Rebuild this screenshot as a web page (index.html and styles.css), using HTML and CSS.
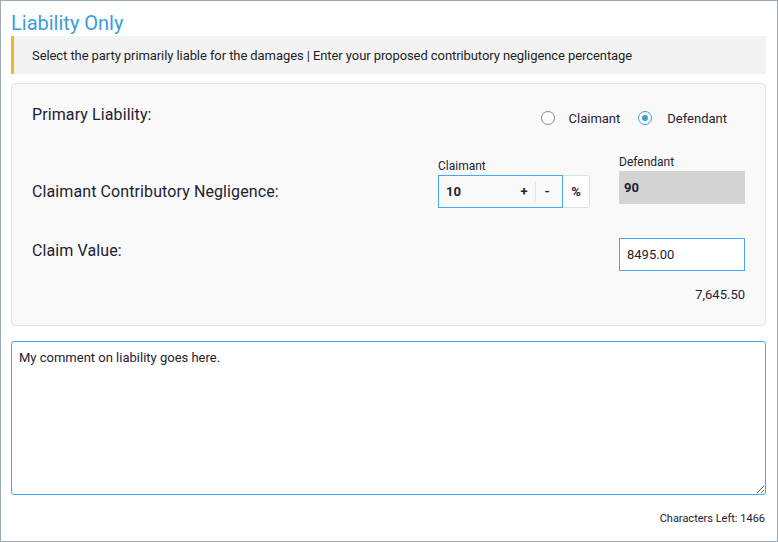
FILE: index.html
```html
<!DOCTYPE html>
<html lang="en">
<head>
<meta charset="utf-8">
<title>Liability Only</title>
<link rel="stylesheet" href="styles.css">
</head>
<body>
<div class="frame">
  <h1 class="title">Liability Only</h1>
  <div class="info">Select the party primarily liable for the damages | Enter your proposed contributory negligence percentage</div>

  <div class="panel">
    <div class="row row-liability">
      <div class="label">Primary Liability:</div>
      <div class="radios">
        <label class="radio"><span class="dot"></span><span>Claimant</span></label>
        <label class="radio"><span class="dot checked"></span><span>Defendant</span></label>
      </div>
    </div>

    <div class="row row-neg">
      <div class="label label-neg">Claimant Contributory Negligence:</div>
      <div class="col col-claimant">
        <div class="small">Claimant</div>
        <div class="group">
          <div class="num"><span class="val">10</span><span class="btn">+</span><span class="sep"></span><span class="btn">-</span></div>
          <div class="addon">%</div>
        </div>
      </div>
      <div class="col col-def">
        <div class="small">Defendant</div>
        <div class="readonly">90</div>
      </div>
    </div>

    <div class="row row-value">
      <div class="label label-value">Claim Value:</div>
      <div class="field">8495.00</div>
    </div>

    <div class="total">7,645.50</div>
  </div>

  <textarea class="comment">My comment on liability goes here.</textarea>
  <div class="chars">Characters Left: 1466</div>
</div>
</body>
</html>
```
FILE: styles.css
```css
* { box-sizing: border-box; }
html, body { margin: 0; padding: 0; background: #fff; }
body {
  font-family: Roboto, "Noto Sans", sans-serif;
  color: #1d2230;
}
.frame {
  width: 778px;
  height: 542px;
  border: 1px solid #9ba9b5;
  padding: 0 11px 0 10px;
}
.title {
  margin: 0;
  padding-top: 10px;
  height: 35px;
  font-size: 20px;
  line-height: 24px;
  font-weight: 400;
  color: #3a9ddd;
}
.info {
  height: 38px;
  background: #f3f3f3;
  border-left: 3px solid #f0b823;
  padding: 1px 0 0 18px;
  font-size: 13px;
  line-height: 37px;
  letter-spacing: -0.08px;
  color: #1f1f1f;
  margin-bottom: 9px;
}
.panel {
  background: #f9f9f9;
  border: 1px solid #e2e2e2;
  border-radius: 4px;
  padding: 20px 20px 20px 20px;
  height: 243px;
}
.row { display: flex; }
.label {
  flex: 1;
  font-size: 16px;
  line-height: 20px;
  padding-top: 1px;
  letter-spacing: 0.1px;
}
.row-liability { height: 50px; }
.radios {
  display: flex;
  margin-top: 4px;
  padding-right: 18px;
  height: 20px;
  align-items: center;
}
.radio {
  display: flex;
  align-items: center;
  font-size: 13px;
}
.radio + .radio { margin-left: 18px; }
.dot {
  width: 14px;
  height: 14px;
  border: 1px solid #8d8d8d;
  border-radius: 50%;
  background: #fff;
  margin-right: 15px;
  position: relative;
}
.radio:first-child .dot { margin-right: 14px; }
.dot.checked { border-color: #3a9ddd; }
.dot.checked::after {
  content: "";
  position: absolute;
  left: 3px; top: 3px;
  width: 6px; height: 6px;
  border-radius: 50%;
  background: #3a9ddd;
}
.row-neg { height: 54px; }
.label-neg { padding-top: 28px; }
.small {
  font-size: 12px;
  line-height: 16px;
  height: 17px;
}
.col-claimant { width: 152px; margin-top: 4px; margin-right: 29px; }
.col-def { width: 126px; }
.group { display: flex; height: 33px; }
.num {
  width: 125px;
  border: 1px solid #45a6f2;
  display: flex;
  align-items: center;
  padding-left: 7px;
  font-size: 13px;
  font-weight: 700;
}
.val { flex: 1; }
.btn { width: 10px; text-align: center; }
.sep { width: 1px; height: 19px; background: #e4e4e4; margin: 0 6px 0 6px; }
.num .btn:last-child { margin-right: 10px; }
.addon {
  width: 27px;
  border: 1px solid #e0e0e0;
  border-left: none;
  border-radius: 0 3px 3px 0;
  background: #fff;
  font-size: 13px;
  font-weight: 700;
  display: flex;
  align-items: center;
  justify-content: center;
}
.readonly {
  height: 33px;
  background: #d3d3d3;
  font-size: 13px;
  font-weight: 700;
  line-height: 33px;
  padding-left: 5px;
}
.row-value { margin-top: 30px; height: 33px; }
.label-value { padding-top: 3px; }
.field {
  width: 126px;
  height: 33px;
  border: 1px solid #45a6f2;
  background: #fff;
  font-size: 13px;
  line-height: 31px;
  padding-left: 7px;
}
.total {
  margin-top: 15px;
  text-align: right;
  font-size: 13px;
  line-height: 18px;
}
.comment {
  display: block;
  width: 755px;
  height: 154px;
  margin-top: 15px;
  border: 1px solid #45a6f2;
  border-radius: 3px;
  padding: 7px 7px;
  font-family: inherit;
  font-size: 13px;
  line-height: 18px;
  color: #1d2230;
  outline: none;
}
.chars {
  margin-top: 16px;
  text-align: right;
  font-size: 11px;
  line-height: 16px;
  padding-right: 1px;
}
```
